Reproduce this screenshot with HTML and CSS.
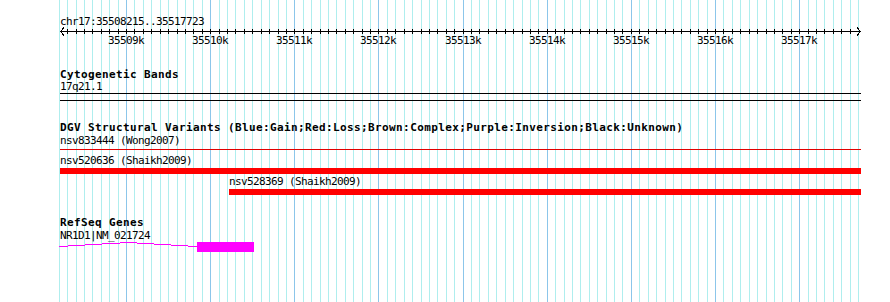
FILE: index.html
```html
<!DOCTYPE html>
<html lang="en">
<head>
    <meta charset="UTF-8">
    <title>chr17:35508215..35517723</title>
    <link rel="stylesheet" href="styles.css">
</head>
<body>
    <!-- track image: 800px panel, 60px left pad, 0.08414 px/bp -->
    <svg class="panel" width="890" height="302" viewBox="0 0 890 302">
        <!-- grid, one line per 100bp, darker one per kb -->
        <path class="grid-minor" d="M59.5 0v302M67.5 0v302M76.5 0v302M84.5 0v302M92.5 0v302M101.5 0v302M109.5 0v302M118.5 0v302M134.5 0v302M143.5 0v302M151.5 0v302M160.5 0v302M168.5 0v302M177.5 0v302M185.5 0v302M193.5 0v302M202.5 0v302M219.5 0v302M227.5 0v302M235.5 0v302M244.5 0v302M252.5 0v302M261.5 0v302M269.5 0v302M278.5 0v302M286.5 0v302M303.5 0v302M311.5 0v302M320.5 0v302M328.5 0v302M336.5 0v302M345.5 0v302M353.5 0v302M362.5 0v302M370.5 0v302M387.5 0v302M395.5 0v302M404.5 0v302M412.5 0v302M421.5 0v302M429.5 0v302M437.5 0v302M446.5 0v302M454.5 0v302M471.5 0v302M479.5 0v302M488.5 0v302M496.5 0v302M505.5 0v302M513.5 0v302M522.5 0v302M530.5 0v302M538.5 0v302M555.5 0v302M564.5 0v302M572.5 0v302M580.5 0v302M589.5 0v302M597.5 0v302M606.5 0v302M614.5 0v302M622.5 0v302M639.5 0v302M648.5 0v302M656.5 0v302M665.5 0v302M673.5 0v302M681.5 0v302M690.5 0v302M698.5 0v302M707.5 0v302M723.5 0v302M732.5 0v302M740.5 0v302M749.5 0v302M757.5 0v302M766.5 0v302M774.5 0v302M782.5 0v302M791.5 0v302M808.5 0v302M816.5 0v302M824.5 0v302M833.5 0v302M841.5 0v302M850.5 0v302M858.5 0v302"/>
        <path class="grid-major" d="M126.5 0v302M210.5 0v302M294.5 0v302M378.5 0v302M463.5 0v302M547.5 0v302M631.5 0v302M715.5 0v302M799.5 0v302"/>

        <!-- ruler -->
        <g class="ruler">
            <text class="label" x="60" y="25">chr17:35508215..35517723</text>
            <path class="ruler-line" d="M60 31.5H861M64 27.5 60.5 31.5 64 35.5M857 27.5 860.5 31.5 857 35.5"/>
            <path class="ruler-line" d="M67.5 29v5M76.5 29v5M84.5 29v5M92.5 29v5M101.5 29v5M109.5 29v5M118.5 29v5M126.5 29v5M134.5 29v5M143.5 29v5M151.5 29v5M160.5 29v5M168.5 29v5M177.5 29v5M185.5 29v5M193.5 29v5M202.5 29v5M210.5 29v5M219.5 29v5M227.5 29v5M235.5 29v5M244.5 29v5M252.5 29v5M261.5 29v5M269.5 29v5M278.5 29v5M286.5 29v5M294.5 29v5M303.5 29v5M311.5 29v5M320.5 29v5M328.5 29v5M336.5 29v5M345.5 29v5M353.5 29v5M362.5 29v5M370.5 29v5M378.5 29v5M387.5 29v5M395.5 29v5M404.5 29v5M412.5 29v5M421.5 29v5M429.5 29v5M437.5 29v5M446.5 29v5M454.5 29v5M463.5 29v5M471.5 29v5M479.5 29v5M488.5 29v5M496.5 29v5M505.5 29v5M513.5 29v5M522.5 29v5M530.5 29v5M538.5 29v5M547.5 29v5M555.5 29v5M564.5 29v5M572.5 29v5M580.5 29v5M589.5 29v5M597.5 29v5M606.5 29v5M614.5 29v5M622.5 29v5M631.5 29v5M639.5 29v5M648.5 29v5M656.5 29v5M665.5 29v5M673.5 29v5M681.5 29v5M690.5 29v5M698.5 29v5M707.5 29v5M715.5 29v5M723.5 29v5M732.5 29v5M740.5 29v5M749.5 29v5M757.5 29v5M766.5 29v5M774.5 29v5M782.5 29v5M791.5 29v5M799.5 29v5M808.5 29v5M816.5 29v5M824.5 29v5M833.5 29v5M841.5 29v5M850.5 29v5"/>
            <text class="label tick-label" x="126" y="44">35509k</text>
            <text class="label tick-label" x="210" y="44">35510k</text>
            <text class="label tick-label" x="294" y="44">35511k</text>
            <text class="label tick-label" x="378" y="44">35512k</text>
            <text class="label tick-label" x="463" y="44">35513k</text>
            <text class="label tick-label" x="547" y="44">35514k</text>
            <text class="label tick-label" x="631" y="44">35515k</text>
            <text class="label tick-label" x="715" y="44">35516k</text>
            <text class="label tick-label" x="799" y="44">35517k</text>
        </g>

        <!-- Cytogenetic Bands -->
        <g class="track">
            <text class="track-title" x="60" y="78">Cytogenetic Bands</text>
            <text class="label" x="60" y="90">17q21.1</text>
            <path class="band" d="M60 93.5H861M60 100.5H861"/>
        </g>

        <!-- DGV -->
        <g class="track">
            <text class="track-title" x="60" y="131">DGV Structural Variants (Blue:Gain;Red:Loss;Brown:Complex;Purple:Inversion;Black:Unknown)</text>
            <text class="label" x="60" y="144">nsv833444 (Wong2007)</text>
            <path class="variant-line" d="M60 149.5H861"/>
            <text class="label" x="60" y="164">nsv520636 (Shaikh2009)</text>
            <rect class="variant" x="60" y="168" width="801" height="6"/>
            <text class="label" x="229" y="185">nsv528369 (Shaikh2009)</text>
            <rect class="variant" x="229" y="189" width="632" height="6"/>
        </g>

        <!-- RefSeq Genes -->
        <g class="track">
            <text class="track-title" x="60" y="226">RefSeq Genes</text>
            <text class="label" x="60" y="239">NR1D1|NM_021724</text>
            <path class="intron" d="M59 246.5H68M68 245.5H85M85 244.5H102M102 243.5H120M120 242.5H137M137 243.5H154M154 244.5H171M171 245.5H188M188 246.5H197"/>
            <rect class="exon" x="197" y="242" width="57" height="10"/>
        </g>
    </svg>
</body>
</html>
```

FILE: styles.css
```css
body {
    margin: 0;
    background: #ffffff;
}

.panel {
    display: block;
    shape-rendering: crispEdges;
}

.grid-minor {
    stroke: #afeeee;
    stroke-width: 1;
}

.grid-major {
    stroke: #8cc6ea;
    stroke-width: 1;
}

.label {
    font-family: "DejaVu Sans Mono", "Liberation Mono", monospace;
    font-size: 11px;
    letter-spacing: -0.62px;
    fill: #000000;
}

.tick-label {
    text-anchor: middle;
}

.track-title {
    font-family: "DejaVu Sans Mono", "Liberation Mono", monospace;
    font-size: 11px;
    font-weight: bold;
    letter-spacing: 0.38px;
    fill: #000000;
}

.ruler-line {
    stroke: #000000;
    fill: none;
}

.band {
    stroke: #000000;
}

.variant-line {
    stroke: #e00000;
}

.variant {
    fill: #ff0000;
}

.intron {
    stroke: #ff00ff;
    fill: none;
}

.exon {
    fill: #ff00ff;
}
```
